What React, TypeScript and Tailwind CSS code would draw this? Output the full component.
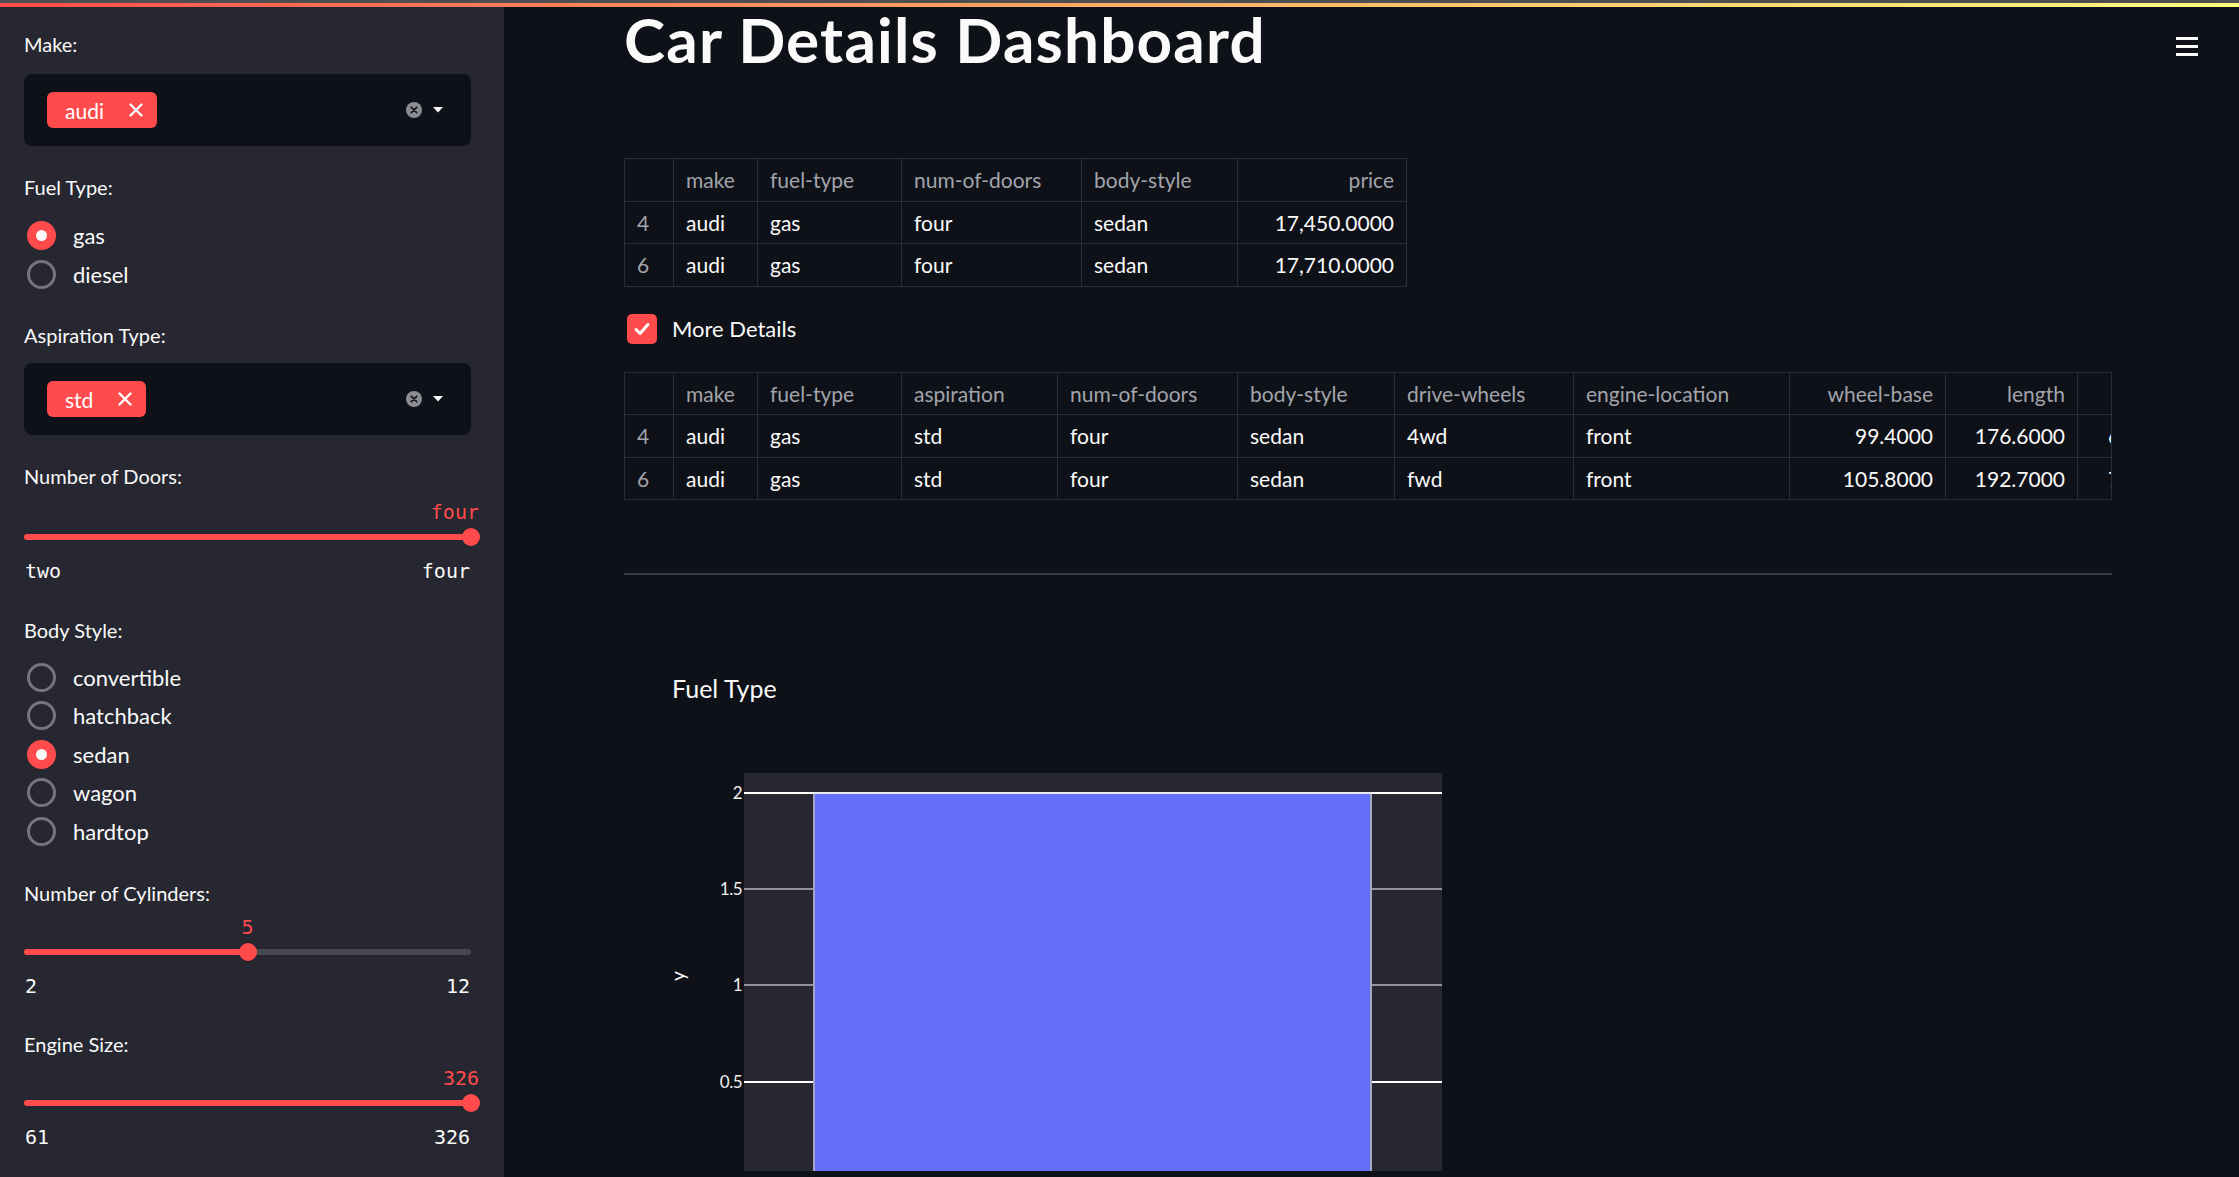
const MONO = "font-['DejaVu_Sans_Mono',monospace]";

function TagClose() {
  return (
    <svg width="14" height="14" viewBox="0 0 14 14">
      <path d="M1.5 1.5L12.5 12.5M12.5 1.5L1.5 12.5" stroke="white" strokeWidth="2.4" strokeLinecap="round" />
    </svg>
  );
}

function MultiSelect({ value }: { value: string }) {
  return (
    <div className="flex h-[72px] w-[447px] items-center rounded-[8px] bg-[#0e1117] pl-[23px] pr-[28px]">
      <div className="flex h-[36px] items-center gap-[25px] rounded-[6px] bg-[#ff4b4b] pl-[18px] pr-[14px] text-[21px] text-white">
        <span className="leading-none">{value}</span>
        <TagClose />
      </div>
      <div className="ml-auto flex items-center gap-[11px]">
        <svg width="16" height="16" viewBox="0 0 16 16">
          <circle cx="8" cy="8" r="8" fill="#8b8c94" />
          <path d="M5.3 5.3L10.7 10.7M10.7 5.3L5.3 10.7" stroke="#16171d" strokeWidth="1.8" strokeLinecap="round" />
        </svg>
        <svg width="10" height="6" viewBox="0 0 10 6">
          <path d="M0 0H10L5 5.5Z" fill="#fafafa" />
        </svg>
      </div>
    </div>
  );
}

function Label({ text, className }: { text: string; className: string }) {
  return <div className={`h-[28px] text-[20px] leading-[28px] text-[#fafafa] ${className}`}>{text}</div>;
}

function Radio({ label, checked, h }: { label: string; checked?: boolean; h: string }) {
  return (
    <div className={`flex items-center pl-[3px] ${h}`}>
      {checked ? (
        <div className="flex h-[29px] w-[29px] items-center justify-center rounded-full bg-[#ff4b4b]">
          <div className="h-[11px] w-[11px] rounded-full bg-[#fafafa]" />
        </div>
      ) : (
        <div className="h-[29px] w-[29px] rounded-full border-[3px] border-[#74757d]" />
      )}
      <span className="ml-[17px] text-[22px] text-[#fafafa]">{label}</span>
    </div>
  );
}

function Slider({
  pct,
  value,
  min,
  max,
  atEnd,
  className,
}: {
  pct: number;
  value: string;
  min: string;
  max: string;
  atEnd?: boolean;
  className: string;
}) {
  return (
    <div className={`w-[447px] ${MONO} ${className}`}>
      <div className="relative h-[24px] text-[20px] leading-[24px] text-[#ff4b4b]">
        {atEnd ? (
          <span className="absolute right-[-8px] top-0">{value}</span>
        ) : (
          <span className="absolute top-0 -translate-x-1/2" style={{ left: `${pct}%` }}>
            {value}
          </span>
        )}
      </div>
      <div className="relative mt-[4px] flex h-[18px] items-center">
        <div className="h-[6px] w-full rounded-full bg-[#474851]" />
        <div className="absolute left-0 h-[6px] rounded-full bg-[#ff4b4b]" style={{ width: `${pct}%` }} />
        <div
          className="absolute top-0 h-[18px] w-[18px] -translate-x-1/2 rounded-full bg-[#ff4b4b]"
          style={{ left: `${pct}%` }}
        />
      </div>
      <div className="mt-[13px] flex h-[24px] justify-between pl-[1px] pr-[1px] text-[20px] leading-[24px] text-[#fafafa]">
        <span>{min}</span>
        <span>{max}</span>
      </div>
    </div>
  );
}

type Col = { name: string; w: number; right?: boolean };

function DataTable({ cols, rows, width }: { cols: Col[]; rows: (string | number)[][]; width?: string }) {
  const cell = (c: Col, i: number, content: string | number, header: boolean) => (
    <div
      key={i}
      className={`flex h-[41.5px] shrink-0 items-center overflow-hidden whitespace-nowrap px-[12px] text-[21px] ${
        i > 0 ? 'border-l border-[#2a2d34]' : ''
      } ${c.right ? 'justify-end' : ''} ${header || i === 0 ? 'text-[#a2a4ab]' : 'text-[#fafafa]'}`}
      style={{ width: c.w }}
    >
      {content}
    </div>
  );
  return (
    <div className={`overflow-hidden border border-[#2a2d34] ${width ?? 'w-fit'}`}>
      <div className="flex w-max">{cols.map((c, i) => cell(c, i, c.name, true))}</div>
      {rows.map((r, ri) => (
        <div key={ri} className="flex w-max border-t border-[#2a2d34]">
          {cols.map((c, i) => cell(c, i, r[i], false))}
        </div>
      ))}
    </div>
  );
}

function FuelChart() {
  const grid = [
    { y: 20, label: '2', w: 2 },
    { y: 116, label: '1.5', w: 1 },
    { y: 212, label: '1', w: 1 },
    { y: 309, label: '0.5', w: 2 },
  ];
  return (
    <svg width="818" height="398" viewBox="0 0 818 398" className="block">
      <rect x="120" y="0" width="698" height="398" fill="#262730" />
      {grid.map((g) => (
        <g key={g.label}>
          <line x1="120" x2="818" y1={g.y} y2={g.y} stroke="#ffffff" strokeWidth={g.w} />
          <text
            x="118"
            y={g.y + 6}
            textAnchor="end"
            fontSize="17"
            fill="#f0f0f2"
            fontFamily="Lato, sans-serif"
            letterSpacing="-0.5"
          >
            {g.label}
          </text>
        </g>
      ))}
      <rect x="189" y="20" width="559" height="378" fill="#636efa" />
      <line x1="190" x2="190" y1="20" y2="398" stroke="#a4a7c2" strokeWidth="2" />
      <line x1="747" x2="747" y1="20" y2="398" stroke="#a4a7c2" strokeWidth="2" />
      <line x1="189" x2="748" y1="20" y2="20" stroke="#e8e9f4" strokeWidth="2" />
      <text
        x="56"
        y="203"
        fontSize="19"
        fill="#fafafa"
        fontFamily="Lato, sans-serif"
        textAnchor="middle"
        dominantBaseline="middle"
        transform="rotate(-90 56 203)"
      >
        y
      </text>
    </svg>
  );
}

export default function App() {
  const t1Cols: Col[] = [
    { name: '', w: 48 },
    { name: 'make', w: 84 },
    { name: 'fuel-type', w: 144 },
    { name: 'num-of-doors', w: 180 },
    { name: 'body-style', w: 156 },
    { name: 'price', w: 169, right: true },
  ];
  const t1Rows = [
    ['4', 'audi', 'gas', 'four', 'sedan', '17,450.0000'],
    ['6', 'audi', 'gas', 'four', 'sedan', '17,710.0000'],
  ];
  const t2Cols: Col[] = [
    { name: '', w: 48 },
    { name: 'make', w: 84 },
    { name: 'fuel-type', w: 144 },
    { name: 'aspiration', w: 156 },
    { name: 'num-of-doors', w: 180 },
    { name: 'body-style', w: 157 },
    { name: 'drive-wheels', w: 179 },
    { name: 'engine-location', w: 216 },
    { name: 'wheel-base', w: 156, right: true },
    { name: 'length', w: 132, right: true },
    { name: 'width', w: 121, right: true },
    { name: 'height', w: 120, right: true },
  ];
  const t2Rows = [
    ['4', 'audi', 'gas', 'std', 'four', 'sedan', '4wd', 'front', '99.4000', '176.6000', '66.4000', '54.3000'],
    ['6', 'audi', 'gas', 'std', 'four', 'sedan', 'fwd', 'front', '105.8000', '192.7000', '71.4000', '55.7000'],
  ];

  return (
    <div className="relative flex h-[1177px] w-full overflow-hidden bg-[#0e1117] font-['Lato',sans-serif]">
      {/* top decoration */}
      <div className="absolute left-0 right-0 top-0 z-10">
        <div className="h-[3px] bg-[#4e4e50]" />
        <div className="h-[4px] bg-gradient-to-r from-[#ff4b4b] to-[#fffd80]" />
      </div>

      {/* sidebar */}
      <aside className="flex h-full w-[504px] shrink-0 flex-col bg-[#262730] pl-[24px]">
        <Label text="Make:" className="mt-[30px]" />
        <div className="mt-[16px]">
          <MultiSelect value="audi" />
        </div>
        <Label text="Fuel Type:" className="mt-[27px]" />
        <div className="mt-[15px]">
          <Radio label="gas" checked h="h-[39px]" />
          <Radio label="diesel" h="h-[39px]" />
        </div>
        <Label text="Aspiration Type:" className="mt-[27px]" />
        <div className="mt-[14px]">
          <MultiSelect value="std" />
        </div>
        <Label text="Number of Doors:" className="mt-[27px]" />
        <Slider pct={100} value="four" min="two" max="four" atEnd className="mt-[10px]" />
        <Label text="Body Style:" className="mt-[33px]" />
        <div className="mt-[14px]">
          <Radio label="convertible" h="h-[38.5px]" />
          <Radio label="hatchback" h="h-[38.5px]" />
          <Radio label="sedan" checked h="h-[38.5px]" />
          <Radio label="wagon" h="h-[38.5px]" />
          <Radio label="hardtop" h="h-[38.5px]" />
        </div>
        <Label text="Number of Cylinders:" className="mt-[28px]" />
        <Slider pct={50} value="5" min="2" max="12" className="mt-[8px]" />
        <Label text="Engine Size:" className="mt-[32px]" />
        <Slider pct={100} value="326" min="61" max="326" atEnd className="mt-[8.5px]" />
      </aside>

      {/* main */}
      <main className="flex min-w-0 flex-1">
        <div className="flex w-[1608px] shrink-0 flex-col pl-[120px]">
          <h1 className="mt-[3px] h-[72px] text-[62px] font-bold leading-[72px] tracking-[1.2px] text-[#fafafa]">
            Car Details Dashboard
          </h1>
          <div className="mt-[83px]">
            <DataTable cols={t1Cols} rows={t1Rows} />
          </div>
          <div className="mt-[27px] flex h-[30px] items-center pl-[3px]">
            <div className="flex h-[30px] w-[30px] items-center justify-center rounded-[5px] bg-[#ff4b4b]">
              <svg width="20" height="20" viewBox="0 0 20 20">
                <path d="M4 10.5L8 14.5L16 5.5" stroke="white" strokeWidth="3" fill="none" strokeLinecap="round" strokeLinejoin="round" />
              </svg>
            </div>
            <span className="ml-[15px] text-[22px] text-[#fafafa]">More Details</span>
          </div>
          <div className="mt-[28px]">
            <DataTable cols={t2Cols} rows={t2Rows} width="w-[1488px]" />
          </div>
          <div className="mt-[73px] h-[2px] w-[1488px] bg-[#393b42]" />
          <div className="ml-[48px] mt-[98px] h-[30px] text-[25px] leading-[30px] text-[#fafafa]">Fuel Type</div>
          <div className="mt-[70px]">
            <FuelChart />
          </div>
        </div>
        <div className="ml-[64px] mt-[37px] flex w-[22px] flex-col gap-[5px]">
          <div className="h-[3px] bg-[#fafafa]" />
          <div className="h-[3px] bg-[#fafafa]" />
          <div className="h-[3px] bg-[#fafafa]" />
        </div>
      </main>
    </div>
  );
}
